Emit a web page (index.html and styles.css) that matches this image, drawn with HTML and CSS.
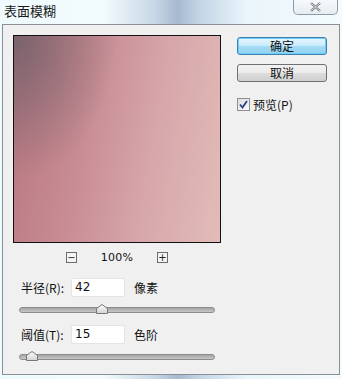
FILE: index.html
```html
<!DOCTYPE html>
<html lang="zh-CN">
<head>
    <meta charset="UTF-8">
    <title>表面模糊</title>
    <link rel="stylesheet" href="styles.css">
</head>
<body>
    <div class="window">
        <div class="titlebar">
            <span class="title">表面模糊</span>
            <button class="close">
                <svg width="13" height="10" viewBox="0 0 13 10">
                    <path d="M2 1 L11 9 M11 1 L2 9" stroke="#6a6a6a" stroke-width="2.2" fill="none"/>
                    <path d="M2 1 L11 9 M11 1 L2 9" stroke="#fff" stroke-width="0.8" fill="none"/>
                </svg>
            </button>
        </div>

        <div class="panel">
            <div class="left">
                <div class="preview"></div>

                <div class="zoom-row">
                    <span class="zoom-btn">−</span>
                    <span class="zoom-value">100%</span>
                    <span class="zoom-btn">+</span>
                </div>

                <div class="param">
                    <span class="label">半径(R):</span>
                    <span class="field">42</span>
                    <span class="unit">像素</span>
                </div>
                <div class="slider">
                    <span class="thumb" style="left: 76px;">
                        <svg width="12" height="10" viewBox="0 0 12 10">
                            <path d="M6 0.5 L11.5 4.5 L11.5 9.5 L0.5 9.5 L0.5 4.5 Z" fill="url(#tg)" stroke="#777"/>
                            <defs>
                                <linearGradient id="tg" x1="0" y1="0" x2="0" y2="1">
                                    <stop offset="0" stop-color="#fdfdfd"/>
                                    <stop offset="1" stop-color="#d2d2d2"/>
                                </linearGradient>
                            </defs>
                        </svg>
                    </span>
                </div>

                <div class="param second">
                    <span class="label">阈值(T):</span>
                    <span class="field">15</span>
                    <span class="unit">色阶</span>
                </div>
                <div class="slider">
                    <span class="thumb" style="left: 6px;">
                        <svg width="12" height="10" viewBox="0 0 12 10">
                            <path d="M6 0.5 L11.5 4.5 L11.5 9.5 L0.5 9.5 L0.5 4.5 Z" fill="url(#tg)" stroke="#777"/>
                        </svg>
                    </span>
                </div>
            </div>

            <div class="right">
                <button class="btn primary">确定</button>
                <button class="btn">取消</button>
                <label class="check">
                    <span class="box">
                        <svg width="9" height="9" viewBox="0 0 9 9">
                            <path d="M1 4.5 L3.5 7.5 L8 1" stroke="#2a3f8a" stroke-width="1.8" fill="none"/>
                        </svg>
                    </span>
                    预览(P)
                </label>
            </div>
        </div>
    </div>
</body>
</html>
```

FILE: styles.css
```css
* {
    margin: 0;
    padding: 0;
    box-sizing: border-box;
}

body {
    font-family: "Noto Sans CJK SC", "DejaVu Sans", sans-serif;
    font-size: 12px;
    color: #111;
    background: #fff;
}

.window {
    width: 342px;
    height: 379px;
    background:
        linear-gradient(to right,
            #eefafd 0%, #f3fbfd 30%, #c9d8e6 45%, #a5b9cf 52%, #c3d4e5 58%, #eaf5fb 72%, #f3fbfd 100%);
    display: flex;
    flex-direction: column;
}

.titlebar {
    height: 24px;
    display: flex;
    justify-content: space-between;
    align-items: flex-start;
    padding-left: 4px;
    padding-right: 4px;
}

.title {
    font-size: 13px;
    line-height: 21px;
    color: #1a1a1a;
}

.close {
    width: 45px;
    height: 15px;
    border: 1px solid #8f9aa6;
    border-top: none;
    border-radius: 0 0 5px 5px;
    background: linear-gradient(#f6f9fc, #e6ecf2);
    display: flex;
    align-items: center;
    justify-content: center;
}

.panel {
    margin: 0 2px 0 2px;
    height: 351px;
    border: 1px solid #8a8f96;
    background: #f0f0f0;
    display: flex;
    padding: 10px 0 0 10px;
}

.left {
    width: 208px;
    display: flex;
    flex-direction: column;
}

.preview {
    width: 208px;
    height: 208px;
    border: 1px solid #111;
    background:
        radial-gradient(ellipse 50% 70% at 0% 0%, rgba(110, 95, 105, 0.85), rgba(110, 95, 105, 0) 100%),
        linear-gradient(100deg, #b97680 0%, #c88c93 35%, #d6a6aa 65%, #e2bcb8 100%);
}

.zoom-row {
    height: 26px;
    display: flex;
    align-items: center;
    justify-content: center;
    padding-top: 2px;
}

.zoom-btn {
    width: 11px;
    height: 11px;
    border: 1px solid #6c6c6c;
    background: #f4f4f4;
    font-family: "DejaVu Sans", sans-serif;
    font-size: 10px;
    line-height: 9px;
    text-align: center;
    color: #222;
}

.zoom-value {
    font-family: "DejaVu Sans", sans-serif;
    font-size: 11px;
    width: 80px;
    text-align: center;
    letter-spacing: 0.3px;
}

.param {
    display: flex;
    align-items: center;
    margin-top: 9px;
    margin-left: 8px;
    height: 19px;
}

.param.second {
    margin-top: 12px;
}

.label {
    width: 50px;
    font-size: 12px;
}

.field {
    width: 54px;
    height: 19px;
    background: #fff;
    border: 1px solid #e4e4e4;
    border-radius: 2px;
    padding-left: 3px;
    font-family: "DejaVu Sans", sans-serif;
    font-size: 12px;
    line-height: 17px;
}

.unit {
    margin-left: 9px;
}

.slider {
    position: relative;
    margin: 10px 0 0 6px;
    width: 196px;
    height: 6px;
    border: 1px solid #8c8c8c;
    border-radius: 3px;
    background: linear-gradient(#a4a4a4, #c8c8c8);
}

.thumb {
    position: absolute;
    top: -4px;
    width: 12px;
    height: 10px;
    display: flex;
}

.right {
    margin-left: 16px;
    padding-top: 2px;
    display: flex;
    flex-direction: column;
    width: 90px;
}

.btn {
    width: 90px;
    height: 18px;
    border: 1px solid #707070;
    border-radius: 3px;
    background: linear-gradient(#f2f2f2 0%, #ebebeb 50%, #dddddd 51%, #cfcfcf 100%);
    font-family: "Noto Sans CJK SC", sans-serif;
    font-size: 12px;
    line-height: 14px;
    color: #111;
    margin-bottom: 9px;
}

.btn.primary {
    border-color: #3c7fb1;
    background: linear-gradient(#e9f7fe 0%, #c6eafc 50%, #a6dcf6 51%, #92d0f0 100%);
    box-shadow: 0 0 0 1px #6fd0f5 inset;
}

.check {
    display: flex;
    align-items: center;
    gap: 3px;
    margin-top: 5px;
    font-size: 12px;
}

.box {
    width: 13px;
    height: 13px;
    border: 1px solid #8e8f8f;
    background: linear-gradient(135deg, #dcdcdc, #fbfbfb);
    display: flex;
    align-items: center;
    justify-content: center;
}
```
